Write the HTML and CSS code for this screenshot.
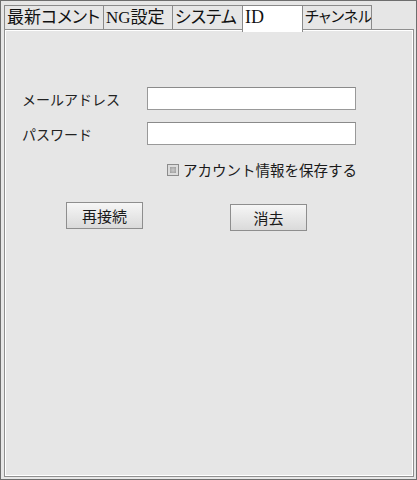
FILE: index.html
```html
<!DOCTYPE html>
<html lang="ja">
<head>
<meta charset="utf-8">
<link rel="stylesheet" href="styles.css">
</head>
<body>
<div class="window">
  <div class="tabs">
    <div class="tab w1">最新コメント</div>
    <div class="tab w2">NG設定</div>
    <div class="tab w3">システム</div>
    <div class="tab w4 active">ID</div>
    <div class="tab w5 small">チャンネル</div>
  </div>
  <div class="panel">
    <div class="form">
      <label class="label">メールアドレス</label>
      <div class="input"></div>
      <label class="label">パスワード</label>
      <div class="input"></div>
    </div>
    <div class="check-row">
      <span class="checkbox"><span class="check-inner"></span></span>
      <span class="check-label">アカウント情報を保存する</span>
    </div>
    <div class="buttons">
      <div class="btn">再接続</div>
      <div class="btn btn2">消去</div>
    </div>
  </div>
</div>
</body>
</html>
```
FILE: styles.css
```css
html, body {
  margin: 0;
  padding: 0;
  background: #e6e6e6;
}
.window {
  width: 417px;
  height: 480px;
  box-sizing: border-box;
  border: 1px solid #6e6e6e;
  background: #e6e6e6;
  padding: 4px 2px 2px 3px;
  display: flex;
  flex-direction: column;
  font-family: "Noto Sans CJK JP", sans-serif;
  color: #1a1a1a;
}
.tabs {
  display: flex;
  height: 24px;
  flex: none;
}
.tab {
  box-sizing: border-box;
  height: 24px;
  border: 1px solid #8a8a8a;
  border-bottom: none;
  background: #e6e6e6;
  padding-left: 2px;
  font-family: "Liberation Serif", "Noto Sans CJK JP", serif;
  font-size: 17px;
  font-feature-settings: "palt";
  line-height: 23px;
  white-space: nowrap;
  overflow: hidden;
  color: #111;
}
.tab + .tab { margin-left: -1px; }
.w1 { width: 100px; }
.w2 { width: 70px; }
.w3 { width: 71px; }
.w4 { width: 61px; }
.w5 { width: 70px; }
.small { font-size: 15px; }
.tab.active {
  background: #fff;
  height: 27px;
  margin-bottom: -3px;
  position: relative;
  z-index: 1;
  font-size: 18px;
}
.panel {
  flex: 1;
  border: 1px solid #8f8f8f;
  box-shadow: inset 0 0 0 1px #ffffff;
  background: #e6e6e6;
  padding: 57px 0 0 17px;
}
.form {
  display: grid;
  grid-template-columns: 125px 209px;
  grid-auto-rows: 23px;
  row-gap: 12px;
  align-items: center;
}
.label {
  font-size: 14px;
  line-height: 20px;
  color: #222;
}
.input {
  box-sizing: border-box;
  height: 23px;
  background: #fff;
  border: 1px solid #999;
  border-top-color: #8a8a8a;
}
.check-row {
  display: flex;
  align-items: center;
  margin: 19px 0 0 145px;
  height: 12px;
}
.checkbox {
  box-sizing: border-box;
  width: 12px;
  height: 12px;
  border: 1px solid #8c8c8c;
  background: #dcdcdc;
  display: flex;
  align-items: center;
  justify-content: center;
  flex: none;
}
.check-inner {
  width: 6px;
  height: 6px;
  background: radial-gradient(circle at 50% 50%, #c8c8c8, #9a9a9a);
}
.check-label {
  font-size: 14.5px;
  line-height: 20px;
  margin-left: 4px;
  white-space: nowrap;
  color: #1a1a1a;
}
.buttons {
  display: flex;
  align-items: flex-start;
  margin: 26px 0 0 44px;
  gap: 87px;
}
.btn {
  box-sizing: border-box;
  width: 77px;
  height: 27px;
  border: 1px solid #8e8e8e;
  background: linear-gradient(#f6f6f6, #dadada);
  font-size: 15px;
  line-height: 25px;
  text-align: center;
  color: #1a1a1a;
}
.btn2 {
  margin-top: 2px;
}
```
